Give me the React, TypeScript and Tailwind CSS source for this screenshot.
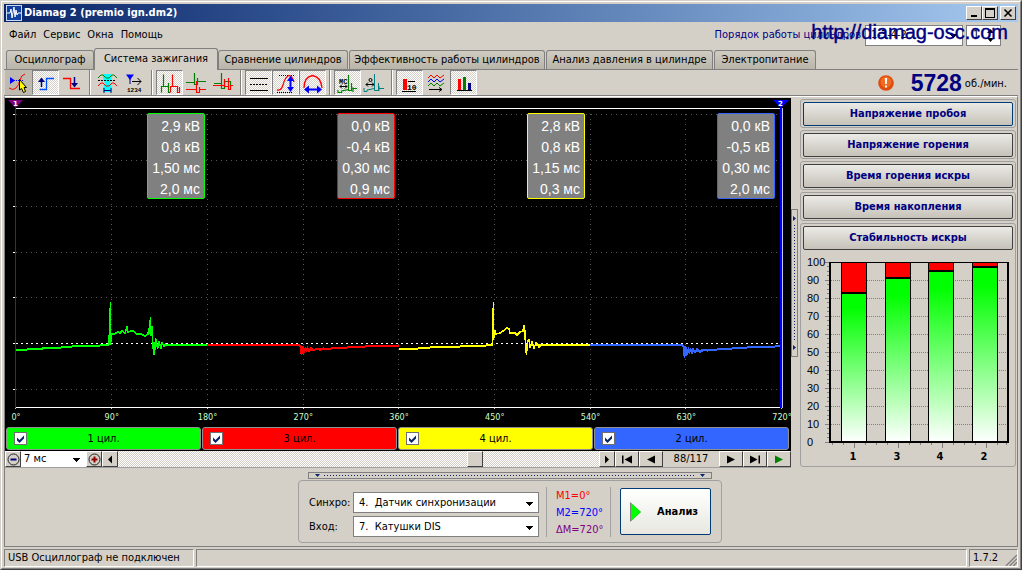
import { useState } from "react";
import type { ReactNode } from "react";

const RAISED =
  "border border-t-white border-l-white border-r-[#404040] border-b-[#404040] bg-[#d4d0c8]";
const CHECKER =
  "bg-[repeating-conic-gradient(#ffffff_0_25%,#d4d0c8_0_50%)] bg-[length:2px_2px]";

function AppLogo() {
  return (
    <svg viewBox="0 0 16 16" className="size-4" aria-hidden="true">
      <rect width="16" height="16" fill="#c8d8f0" />
      <rect x="1" y="1" width="14" height="14" fill="#1040a0" />
      <path d="M1 8H4L5 4L6 13L8 2L9 12L10 5L11 10L12 8H15" fill="none" stroke="#fff" strokeWidth="1" />
    </svg>
  );
}

function TitleBar() {
  const box =
    "flex h-[14px] w-4 items-center justify-center border border-t-white border-l-white border-r-[#404040] border-b-[#404040] bg-[#d4d0c8]";
  return (
    <header className="flex h-[18px] items-center bg-linear-to-r from-[#0a246a] to-[#a6caf0] pr-[2px] pl-[2px]">
      <AppLogo />
      <h1 className="ml-[2px] flex-1 text-[11px] leading-4 font-bold whitespace-nowrap text-white">
        Diamag 2 (premio ign.dm2)
      </h1>
      <button className={box} aria-label="Свернуть">
        <svg viewBox="0 0 12 10" className="h-[10px] w-3" shapeRendering="crispEdges">
          <path d="M3 7h6v2H3z" />
        </svg>
      </button>
      <button className={box} aria-label="Развернуть">
        <svg viewBox="0 0 12 10" className="h-[10px] w-3" shapeRendering="crispEdges">
          <path d="M1 0h10v10H1zM2 2v7h8V2z" fillRule="evenodd" />
        </svg>
      </button>
      <button className={`${box} ml-[2px]`} aria-label="Закрыть">
        <svg viewBox="0 0 12 10" className="h-[10px] w-3">
          <path d="M2.500 1.500L9.500 8.500M9.500 1.500L2.500 8.500" stroke="#000" strokeWidth="1.600" />
        </svg>
      </button>
    </header>
  );
}

function Caret({ className = "" }: { className?: string }) {
  return (
    <svg viewBox="0 0 7 4" className={`h-1 w-[7px] ${className}`} shapeRendering="crispEdges" aria-hidden="true">
      <path d="M0 0H7L3.500 4z" />
    </svg>
  );
}

function Drop({ id, label, options, className }: { id: string; label?: string; options: string[]; className: string }) {
  return (
    <div className={`relative ${className}`}>
      <select
        id={id}
        aria-label={label}
        className="block h-full w-full appearance-none border border-[#808080] bg-white pl-[5px] leading-4 outline-none"
      >
        {options.map((o) => (
          <option key={o}>{o}</option>
        ))}
      </select>
      <Caret className="pointer-events-none absolute top-1/2 right-[6px] -mt-px" />
    </div>
  );
}

function MenuBar() {
  return (
    <div className="relative flex h-[26px] items-center pl-[5px]">
      <nav className="flex flex-1 gap-[7px]">
        {["Файл", "Сервис", "Окна", "Помощь"].map((m) => (
          <button key={m}>{m}</button>
        ))}
      </nav>
      <label htmlFor="order" className="mr-1 text-[#000080]">
        Порядок работы цилиндров
      </label>
      <Drop id="order" options={["1-3-4-2", "1-2-4-3"]} className="h-[21px] w-[98px]" />
      <div className="mr-[17px] ml-[3px] flex h-[21px] w-[35px] items-center border border-[#808080] bg-white">
        <input aria-label="Номер цилиндра" defaultValue="1" className="w-[20px] bg-white pl-[6px] outline-none" />
        <svg viewBox="0 0 7 15" className="h-[15px] w-[7px]" aria-hidden="true">
          <path d="M0 5L3.500 1L7 5zM0 10L3.500 14L7 10z" />
        </svg>
      </div>
      <a
        href="http://diamag-osc.com"
        className="absolute top-0 right-[10px] font-['Liberation_Sans',sans-serif] text-[20px] leading-5 whitespace-nowrap text-[#000080] [-webkit-text-stroke:0.4px_#000080]"
      >
        http://diamag-osc.com
      </a>
    </div>
  );
}

const TABS: [string, string][] = [
  ["Осциллограф", "w-[88px]"],
  ["Система зажигания", "w-[124px]"],
  ["Сравнение цилиндров", "w-[130px]"],
  ["Эффективность работы цилиндров", "w-[196px]"],
  ["Анализ давления в цилиндре", "w-[167px]"],
  ["Электропитание", "w-[102px]"],
];

function TabStrip() {
  return (
    <div role="tablist" className="flex h-[21px] items-end gap-px pl-[2px]">
      {TABS.map(([name, width], i) => (
        <button
          key={name}
          role="tab"
          aria-selected={i === 1}
          className={
            i === 1
              ? `${width} relative z-10 -mx-px -mb-px h-[22px] rounded-t-[3px] border border-b-0 border-[#808080] bg-[#d4d0c8] pb-px whitespace-nowrap`
              : `${width} h-[19px] rounded-t-[3px] border border-b-0 border-[#808080] bg-linear-to-b from-[#d0ccc2] to-[#bab5a9] whitespace-nowrap`
          }
        >
          {name}
        </button>
      ))}
    </div>
  );
}

const RED = "#ff0000";
const GREEN = "#008000";
const BLUE = "#0000ff";

const ICONS: { name: string; pressed?: boolean; sep?: boolean; art: ReactNode }[] = [
  {
    name: "Синхронизация",
    art: (
      <>
        <path d="M4 18Q8 21 11 18Q14 15 15 10Q16 5 20 4" stroke={RED} />
        <path d="M9 10.500H18" stroke={BLUE} strokeDasharray="1 1" />
        <path d="M5 7V14L10 10.500z" fill={BLUE} />
        <path d="M14.500 9.500V20L16.500 18.500L18.500 22.500L20.500 21.500L19 17.500H21.500z" fill="#ffff00" stroke="#000" />
      </>
    ),
  },
  {
    name: "Фронт",
    pressed: true,
    art: (
      <>
        <path d="M7.500 19.500H14.500V8.500H22" stroke="#0050ff" strokeWidth="1.300" />
        <path d="M9.500 10V17" stroke="#000080" strokeWidth="1.500" />
        <path d="M6 12L9.500 7.500L13 12z" fill="#000080" />
      </>
    ),
  },
  {
    name: "Спад",
    art: (
      <>
        <path d="M4 8.500H11.500V18.500H21" stroke={RED} strokeWidth="1.300" />
        <path d="M15.500 7V14" stroke="#000080" strokeWidth="1.500" />
        <path d="M12 13L15.500 17.500L19 13z" fill="#000080" />
      </>
    ),
  },
  {
    name: "Фильтр",
    sep: true,
    art: (
      <>
        <path d="M9 4H18V8L16 13L18 18V22H9V18L11 13L9 8z" fill="#00ffff" />
        <path d="M4 8L7 5H9L12 8H15L18 5H20L23 8" stroke={GREEN} />
        <path d="M4 10.500H22" stroke="#000" strokeDasharray="2 1" />
        <path d="M4 16L7 13H9L12 16H15L18 13H20L23 16" stroke={RED} />
        <path d="M10 20.500H17M10 18V23M17 18V23" stroke="#000080" />
      </>
    ),
  },
  {
    name: "Нумерация",
    art: (
      <>
        <path d="M5 4.500H13L9 10z" fill={BLUE} />
        <path d="M9 9V14" stroke="#0000a0" />
        <path d="M11 11.500H20M16.500 8L20 11.500L16.500 15" stroke="#000" />
        <text x="6" y="22" fontSize="6" fontWeight="700" fontFamily="Liberation Mono, monospace" fill="#000">
          1234
        </text>
      </>
    ),
  },
  {
    name: "Последовательно",
    pressed: true,
    sep: true,
    art: (
      <g strokeWidth="1.200">
        <path d="M5.500 22.500V16.500H7.500V4.500V16.500H12.500V13V22.500H14" stroke={GREEN} />
        <path d="M14.500 22.500V16.500H16.500V4.500V16.500H21.500V22.500H23.500V17" stroke={RED} />
      </g>
    ),
  },
  {
    name: "Друг под другом",
    art: (
      <g strokeWidth="1.200">
        <path d="M3 12.500H11.500V3V14.500H14.500V8V11.500H23" stroke={GREEN} />
        <path d="M3 19.500H13.500V11V22.500H16.500V17V19.500H23" stroke={RED} />
      </g>
    ),
  },
  {
    name: "Наложение",
    art: (
      <g strokeWidth="1.200">
        <path d="M4 13.500H11.500V3V18.500H14.500V11.500H20.500V16" stroke={GREEN} />
        <path d="M3 15.500H14.500V9V16.500H18.500V8V19.500H20.500V15.500H23" stroke={RED} />
      </g>
    ),
  },
  {
    name: "Уровни",
    pressed: true,
    sep: true,
    art: (
      <>
        <path d="M5 8.500H23M5 20.500H23" stroke="#000" />
        <path d="M5 14.500H23" stroke="#000" strokeDasharray="2 1" />
      </>
    ),
  },
  {
    name: "Амплитуда",
    pressed: true,
    art: (
      <>
        <path d="M7 5.500H23M5 22.500H20" stroke="#000" strokeDasharray="1 1" />
        <path d="M5 20Q9 21 11 15Q13 7 17 5.500Q20 6 22 12" stroke={RED} strokeWidth="1.300" />
        <path d="M18.500 9V19" stroke={BLUE} strokeWidth="2" />
        <path d="M15 11L18.500 6L22 11zM15 17L18.500 22L22 17z" fill={BLUE} />
      </>
    ),
  },
  {
    name: "Длительность",
    pressed: true,
    art: (
      <>
        <path d="M5 18Q5 7 13.500 5.500Q22 7 23 18" stroke={RED} strokeWidth="1.300" />
        <path d="M9 19.500H19" stroke={BLUE} strokeWidth="2" />
        <path d="M10 15.500L5 19.500L10 23.500zM18 15.500L23 19.500L18 23.500z" fill={BLUE} />
      </>
    ),
  },
  {
    name: "Миллисекунды",
    pressed: true,
    sep: true,
    art: (
      <>
        <text x="5" y="14" fontSize="7" fontWeight="700" fontFamily="Liberation Mono, monospace" fill="#000">
          МС
        </text>
        <path d="M6 16.500H13M8 14.500L6 16.500L8 18.500M11 14.500L13 16.500L11 18.500" stroke="#000" />
        <path d="M4 20V22.500H7.500V21L14.500 19.500V5V20.500H17.500V13M17 18H19V22M19 18.500H23" stroke={GREEN} strokeWidth="1.200" />
      </>
    ),
  },
  {
    name: "Градусы",
    art: (
      <>
        <circle cx="9.500" cy="10" r="1.500" stroke="#000" />
        <path d="M5 14.500H13M7 12.500L5 14.500L7 16.500M11 12.500L13 14.500L11 16.500" stroke="#000" />
        <path d="M3 18V21.500H6V20L13.500 18.500V4V20.500H17.500V13M18 16V21M18 18.500H23" stroke="#008080" />
      </>
    ),
  },
  {
    name: "Значения",
    pressed: true,
    sep: true,
    art: (
      <>
        <path d="M7 9H11V20H7z" fill={RED} />
        <path d="M12 11.500H19M6 21.500H20" stroke="#000" />
        <text x="11" y="20" fontSize="8" fontWeight="700" fontFamily="Liberation Mono, monospace" fill="#000">
          10
        </text>
      </>
    ),
  },
  {
    name: "Тренд",
    art: (
      <>
        <path d="M5 8L8 5L11 8L14 5L17 8L21 5" stroke={RED} />
        <path d="M5 12L8 9L11 12L14 9L17 12L21 9" stroke={BLUE} />
        <path d="M5 16L8 13L11 16L14 13L17 16L21 13" stroke={GREEN} />
        <path d="M6 19.500H19M16 17.500L19 19.500L16 21.500" stroke="#000" />
      </>
    ),
  },
  {
    name: "Гистограмма",
    pressed: true,
    art: (
      <>
        <path d="M8 9H11V20H8z" fill={RED} />
        <path d="M13 7H16V20H13z" fill={GREEN} />
        <path d="M18 13H21V20H18z" fill="#000080" />
        <path d="M7 20.500H22" stroke="#000" />
      </>
    ),
  },
];

function Toolbar() {
  return (
    <div className="flex h-[27px] items-center border-y border-t-[#808080] border-b-[#808080] pl-px">
      {ICONS.map((icon, i) => (
        <div key={icon.name} className="flex">
          {icon.sep && (
            <span className="mx-[3px] h-[25px] w-[2px] border-r border-l border-r-white border-l-[#808080]" />
          )}
          <button
            aria-label={icon.name}
            aria-pressed={!!icon.pressed}
            className={
              icon.pressed
                ? `h-[25px] w-[27px] border border-t-[#808080] border-l-[#808080] border-r-white border-b-white ${CHECKER}`
                : i === 0
                  ? "h-[25px] w-[27px] border border-transparent bg-[#bfbab0]"
                  : "h-[25px] w-[27px] border border-transparent"
            }
          >
            <svg viewBox="0 0 27 25" className="-m-px h-[25px] w-[27px]" fill="none">
              {icon.art}
            </svg>
          </button>
        </div>
      ))}
      <div className="ml-auto flex items-center pr-[11px]">
        <svg viewBox="0 0 16 16" className="mr-[17px] size-4" aria-hidden="true">
          <circle cx="8" cy="8" r="7.800" fill="#e04c0c" />
          <circle cx="8" cy="7" r="5.500" fill="#f06a20" />
          <path d="M6.800 3h2.400l-.4 6H7.200zM7 10.500h2v2H7z" fill="#fff" />
        </svg>
        <strong className="font-['Liberation_Sans',sans-serif] text-[23px] leading-6 text-[#000080]">5728</strong>
        <span className="ml-[3px] pt-[3px]">об./мин.</span>
      </div>
    </div>
  );
}

const X_LINES = [111, 207, 303, 398, 494, 590, 685];
const Y_LINES = [114, 160, 206, 252, 297, 389];
const Y_TICKS = [114, 160, 206, 252, 297, 343, 389];

const WAVES = [
  {
    color: "#00ff00",
    slope: "16,350 24,350 30,349 40,349 45,348 57,348 65,347 80,346 92,346 109,345",
    burst:
      "109,345 109.500,325 110.500,302 110.500,345 111.500,334 114,334 118,332 120,333 122,331 125,333 127,327 128,332 131,331 133,331 137,334 141,334 145,336 148,334 149,328 149,334 150.500,317 151,336 152,326 152.500,343 153,343 153.500,354 154.500,354 155.500,338 156.500,342 157.500,349 159,342 161,348 162,343 164,346 166,344",
    tail: "166,345 207,345",
  },
  {
    color: "#ff0000",
    slope: "207,345 300,345",
    burst:
      "300,345 301.500,355 302,346 303,354 303.500,346 304.500,353 305.500,347 306.500,352 307.500,348 309,351 311,348 313,350 316,349 320,350 324,348",
    tail: "308,350 322,349 340,348 355,347 375,346 399,346",
  },
  {
    color: "#ffff00",
    slope: "399,349 411,349 425,348 435,347 455,347 465,346 480,346 493,345",
    burst:
      "492.500,345 492.500,325 493.500,302 493.500,340 495,330 496,334 500,333 503,331 507,328 509,329 510,333 515,333 517,335 520,332 523,331 524,325 525,331 525.500,347 526.500,355 527.500,341 529,340 530,348 532,342 534,348 536,343 539,347 542,344",
    tail: "536,345 590,345",
  },
  {
    color: "#3366ff",
    slope: "590,345 683,345",
    burst:
      "683,345 684.500,358 685,346 686,356 686.500,347 687.500,355 688.500,347 689.500,354 690.500,348 692,353 693,349 695,352 697,349 700,352 704,350 708,351",
    tail: "692,351 710,350 725,349 740,348 755,347 770,347 781,346",
  },
];

const READOUTS = [
  { frame: "border-[#00ff00]", values: ["2,9 кВ", "0,8 кВ", "1,50 мс", "2,0 мс"] },
  { frame: "border-[#ff0000]", values: ["0,0 кВ", "-0,4 кВ", "0,30 мс", "0,9 мс"] },
  { frame: "border-[#ffff00]", values: ["2,8 кВ", "0,8 кВ", "1,15 мс", "0,3 мс"] },
  { frame: "border-[#3366ff]", values: ["0,0 кВ", "-0,5 кВ", "0,30 мс", "2,0 мс"] },
];

const CYLINDERS = [
  { name: "1 цил.", fill: "bg-[#00ff00]" },
  { name: "3 цил.", fill: "bg-[#ff0000]" },
  { name: "4 цил.", fill: "bg-[#ffff00]" },
  { name: "2 цил.", fill: "bg-[#3366ff]" },
];

function Scope() {
  return (
    <div className="relative bg-black">
      <svg viewBox="5 98 786 311" preserveAspectRatio="none" className="block h-[311px] w-full" fill="none">
        <g shapeRendering="crispEdges">
          {X_LINES.map((x) => (
            <path key={x} d={`M${x}.500 114V407`} stroke="#585858" strokeDasharray="1 4" />
          ))}
          {Y_LINES.map((y) => (
            <path key={y} d={`M16 ${y}.500H781`} stroke="#585858" strokeDasharray="1 4" />
          ))}
          {Y_TICKS.map((y) => (
            <path key={y} d={`M13 ${y}.500H15`} stroke="#fff" />
          ))}
          {[15, ...X_LINES, 781].map((x) => (
            <path key={x} d={`M${x}.500 408V410`} stroke="#c8c8c8" />
          ))}
          <path d="M16 108.500H781M16 407.500H782" stroke="#fff" />
          <path d="M16 343.500H781" stroke="#fff" strokeDasharray="2 3" />
          {WAVES.map((w) => (
            <g key={w.color} stroke={w.color}>
              <polyline points={w.slope} strokeWidth="2" />
              <polyline points={w.burst} strokeWidth="1.500" />
              <polyline points={w.tail} strokeWidth="2" />
            </g>
          ))}
          <path d="M15 106H16V408H15z" fill="#800080" />
          <path d="M780 106H782V408H780z" fill="#0000ff" />
          <path d="M782 108H783V408H782z" fill="#c8c8ff" />
        </g>
        <path d="M8 100H23L15.500 108z" fill="#800080" />
        <path d="M773 100H789L781 108z" fill="#0000ff" />
        <g fill="#fff" fontSize="7" fontWeight="700" textAnchor="middle" fontFamily="DejaVu Sans, sans-serif">
          <text x="15.500" y="106">1</text>
          <text x="780.500" y="106">2</text>
        </g>
      </svg>
      <div className="absolute top-[15px] right-[16px] left-[10px] grid grid-cols-4 justify-items-end">
        {READOUTS.map((r) => (
          <div
            key={r.frame}
            className={`h-[86px] w-[58px] rounded-[2px] border bg-[#808080] pt-[2px] pr-1 text-right font-['Liberation_Sans',sans-serif] text-[14px] leading-[21px] whitespace-nowrap text-white ${r.frame}`}
          >
            {r.values.map((v) => (
              <div key={v}>{v}</div>
            ))}
          </div>
        ))}
      </div>
      <div className="flex h-[17px] justify-between overflow-hidden pr-[9px] pl-[11px] text-[9px] leading-4 text-[#ccffcc]">
        {[0, 90, 180, 270, 360, 450, 540, 630, 720].map((d) => (
          <span key={d} className="flex w-0 justify-center">
            {d}°
          </span>
        ))}
      </div>
      <div className="grid grid-cols-4 gap-px py-px pr-[2px] pl-px">
        {CYLINDERS.map((c) => (
          <CylinderToggle key={c.name} {...c} />
        ))}
      </div>
    </div>
  );
}

function CylinderToggle({ name, fill }: { name: string; fill: string }) {
  const [on, setOn] = useState(true);
  return (
    <label className={`flex h-[23px] items-center rounded-[3px] border border-[#909090] ${fill}`}>
      <span className="relative ml-[7px] size-[13px]">
        <input
          type="checkbox"
          checked={on}
          onChange={() => setOn(!on)}
          className="block size-[13px] appearance-none border border-[#707070] bg-white"
        />
        {on && (
          <svg viewBox="0 0 13 13" className="pointer-events-none absolute inset-0 size-[13px]">
            <path d="M3 5.500L5.500 8L10 3.500V6.500L5.500 11L3 8.500z" fill="#0a246a" />
          </svg>
        )}
      </span>
      <span className="flex-1 pr-5 text-center">{name}</span>
    </label>
  );
}

function Glyph({ d, color = "#000" }: { d: string; color?: string }) {
  return (
    <svg viewBox="0 0 12 9" className="h-[9px] w-3" aria-hidden="true">
      <path d={d} fill={color} />
    </svg>
  );
}

function ScrollRow() {
  const nav = `flex h-4 w-6 items-center justify-center ${RAISED}`;
  return (
    <div className="flex h-[17px] items-start border-b border-[#a0a0a0]">
      <button aria-label="Уменьшить масштаб" className={`flex size-4 items-center justify-center ${RAISED}`}>
        <svg viewBox="0 0 13 13" className="size-[13px] shrink-0">
          <circle cx="6.500" cy="6.500" r="5.500" fill="none" stroke="#222" />
          <path d="M3.500 5.500h6v2h-6z" fill="#000080" />
        </svg>
      </button>
      <Drop id="time" label="Развёртка" options={["7 мс", "14 мс"]} className="h-4 w-[65px] [&>select]:border-0 [&>select]:pl-[3px]" />
      <button aria-label="Увеличить масштаб" className={`flex size-4 items-center justify-center ${RAISED}`}>
        <svg viewBox="0 0 13 13" className="size-[13px] shrink-0">
          <circle cx="6.500" cy="6.500" r="5.500" fill="none" stroke="#222" />
          <path d="M3.500 5.500h2v-2h2v2h2v2h-2v2h-2v-2h-2z" fill="#900000" />
        </svg>
      </button>
      <button aria-label="Прокрутить влево" className={`flex size-4 items-center justify-center ${RAISED}`}>
        <Glyph d="M8 0.500V8.500L4 4.500z" />
      </button>
      <div className={`flex h-4 flex-1 ${CHECKER}`}>
        <span className="flex-[348]" />
        <span className={`h-4 w-4 ${RAISED}`} />
        <span className="flex-[116]" />
      </div>
      <button aria-label="Прокрутить вправо" className={`flex size-4 items-center justify-center ${RAISED}`}>
        <Glyph d="M4 0.500V8.500L8 4.500z" />
      </button>
      <button aria-label="В начало" className={nav}>
        <Glyph d="M1 .5h1.500v8H1zM11 .5v8L3.500 4.500z" />
      </button>
      <button aria-label="Назад" className={nav}>
        <Glyph d="M10 .5v8L2 4.500z" />
      </button>
      <output className="h-4 w-[56px] text-center leading-4">88/117</output>
      <button aria-label="Вперёд" className={nav}>
        <Glyph d="M2 .5v8L10 4.500z" />
      </button>
      <button aria-label="В конец" className={nav}>
        <Glyph d="M1 .5v8L8.500 4.500zM9.500 .5H11v8H9.500z" />
      </button>
      <button aria-label="Воспроизвести" className={nav}>
        <Glyph d="M2 .5v8L10 4.500z" color="#008000" />
      </button>
    </div>
  );
}

const BARS = [
  { name: "1", value: 83, x: 39 },
  { name: "3", value: 91, x: 83 },
  { name: "4", value: 95, x: 126 },
  { name: "2", value: 97, x: 170 },
];

function StabilityChart() {
  const y = (v: number) => 192 - v * 1.8;
  const scale = [0, 10, 20, 30, 40, 50, 60, 70, 80, 90, 100];
  return (
    <svg viewBox="0 0 210 215" className="block h-auto w-full">
      <defs>
        <linearGradient id="spark" x1="0" y1="0" x2="0" y2="1">
          <stop offset="0" stopColor="#00ff00" />
          <stop offset="0.100" stopColor="#00ff00" />
          <stop offset="1" stopColor="#ffffff" />
        </linearGradient>
      </defs>
      <g shapeRendering="crispEdges">
        {scale.map((v) => (
          <path key={v} d={`M22 ${y(v)}.500H26`} stroke="#808080" />
        ))}
        {scale.slice(1, 10).map((v) => (
          <path key={v} d={`M28 ${y(v)}.500H204`} stroke="#808080" strokeDasharray="1 1" />
        ))}
        {scale.slice(0, 10).map((v) => (
          <path
            key={v}
            d={`M24 ${y(v + 2.5)}H26M24 ${y(v + 5)}H26M24 ${y(v + 7.5)}H26`}
            stroke="#808080"
          />
        ))}
        {BARS.map((b) => (
          <g key={b.name}>
            <rect x={b.x} y="12" width="24" height="180" fill="#ff0000" />
            <rect x={b.x} y={y(b.value)} width="24" height={192 - y(b.value)} fill="url(#spark)" />
            <rect x={b.x - 0.5} y="12.500" width="25" height="180" fill="none" stroke="#000" />
            <path d={`M${b.x} ${Math.round(y(b.value))}h24`} stroke="#000" strokeWidth="2" />
          </g>
        ))}
        <path d="M26 12.500H206" stroke="#000" />
        <path d="M27 12V193M205 12V193M26 192H206" stroke="#000" strokeWidth="2" />
        {[29, 40, 51, 62, 73, 84, 95, 106, 117, 128, 139, 150, 161, 172, 183, 194, 203].map((x, i) => (
          <path key={x} d={`M${x}.500 193V${i % 4 === 2 ? 198 : 195}`} stroke="#808080" />
        ))}
      </g>
      <g fontFamily="Liberation Sans, sans-serif" fontSize="11">
        {scale.map((v) => (
          <text key={v} x="4" y={y(v) + 4}>
            {v}
          </text>
        ))}
      </g>
      <g fontFamily="DejaVu Sans Condensed, DejaVu Sans, sans-serif" fontSize="11" fontWeight="700" textAnchor="middle">
        {BARS.map((b) => (
          <text key={b.name} x={b.x + 11} y="210">
            {b.name}
          </text>
        ))}
      </g>
    </svg>
  );
}

const METRICS = ["Напряжение пробоя", "Напряжение горения", "Время горения искры", "Время накопления", "Стабильность искры"];

function SidePanel() {
  return (
    <aside className="mr-px flex w-[216px] flex-col gap-[2px] pt-px">
      {METRICS.map((m, i) => (
        <section key={m} className="rounded-[3px] border border-[#a0a0a0] px-[2px] pt-[2px] pb-px">
          <button
            className={`h-6 w-full rounded-[2px] border bg-linear-to-b from-[#ebeae6] to-[#c6c2b9] text-[11px] font-bold text-[#000080] ${
              i === 0 ? "border-[#003c74]" : "border-[#404040]"
            }`}
          >
            {m}
          </button>
          {i === METRICS.length - 1 && <StabilityChart />}
        </section>
      ))}
    </aside>
  );
}

function ControlPanel() {
  return (
    <div className="flex flex-col items-center pt-1 pr-[2px] pb-[3px]">
      <div className="flex h-[7px] w-[404px] items-center border border-[#808080] px-[6px]">
        <svg viewBox="0 0 5 3" className="h-[3px] w-[5px]" aria-hidden="true">
          <path d="M0 0H5L2.500 3z" fill="#0a246a" />
        </svg>
        <span className="mx-1 h-px flex-1 bg-[repeating-linear-gradient(90deg,#0a246a_0_1px,transparent_1px_3px)]" />
        <svg viewBox="0 0 5 3" className="h-[3px] w-[5px]" aria-hidden="true">
          <path d="M0 0H5L2.500 3z" fill="#0a246a" />
        </svg>
      </div>
      <section className="mt-px flex h-[63px] w-[424px] items-center rounded-[4px] border border-[#a0a0a0] px-[10px]">
        <div className="grid grid-cols-[44px_186px] items-center gap-y-[3px] pt-[6px]">
          <label htmlFor="sync">Синхро:</label>
          <Drop id="sync" options={["4.\u00a0 Датчик синхронизации"]} className="h-[21px]" />
          <label htmlFor="input">Вход:</label>
          <Drop id="input" options={["7.\u00a0 Катушки DIS"]} className="h-[21px]" />
        </div>
        <div className="ml-[7px] flex h-[50px] w-[65px] flex-col border-x border-[#a0a0a0] pl-[9px] leading-[17px]">
          <span className="text-[#ff0000]">M1=0°</span>
          <span className="text-[#0000ff]">M2=720°</span>
          <span className="text-[#800080]">ΔM=720°</span>
        </div>
        <button className="ml-auto flex h-[47px] w-[91px] items-center rounded-[2px] border border-[#003c74] bg-linear-to-b from-white to-[#e8e8e0] pl-[9px] text-[11px] font-bold">
          <svg viewBox="0 0 11 20" className="mr-4 h-5 w-[11px]" aria-hidden="true">
            <path d="M0 0V20L11 10z" fill="#808080" />
            <path d="M1 1V19L11 10z" fill="#00ff00" />
          </svg>
          Анализ
        </button>
      </section>
    </div>
  );
}

function StatusBar() {
  const cell = "h-[18px] border border-t-[#808080] border-l-[#808080] border-r-white border-b-white leading-4";
  return (
    <footer className="mt-auto flex gap-[2px] border-t border-[#808080] pt-[2px]">
      <span className={`${cell} w-[190px] pl-[3px] whitespace-nowrap`}>USB Осциллограф не подключен</span>
      <span className={`${cell} flex-1`} />
      <span className={`${cell} flex w-[49px] justify-between pl-[3px]`}>
        1.7.2
        <svg viewBox="0 0 13 13" className="mt-1 size-3" aria-hidden="true">
          <path d="M1 13L13 1M5 13L13 5M9 13L13 9" stroke="#808080" strokeWidth="1.500" />
        </svg>
      </span>
    </footer>
  );
}

export default function App() {
  return (
    <div className="flex min-h-screen flex-col border border-t-[#d4d0c8] border-r-[#404040] border-b-[#404040] border-l-[#d4d0c8] bg-[#d4d0c8] font-['DejaVu_Sans_Condensed','DejaVu_Sans',sans-serif] text-[11px] leading-4 text-black">
      <div className="flex flex-1 flex-col border border-t-white border-r-[#808080] border-b-[#808080] border-l-white px-[2px] pt-[2px] pb-px">
        <TitleBar />
        <MenuBar />
        <TabStrip />
        <Toolbar />
        <main className="flex flex-1 flex-col border-x border-[#808080] border-t border-t-white pt-px">
          <div className="flex items-start">
            <div className="min-w-0 flex-1">
              <Scope />
              <ScrollRow />
            </div>
            <div className="mt-[111px] mr-[2px] flex h-[148px] w-[7px] flex-col items-center border border-[#808080] py-[6px]">
              <svg viewBox="0 0 3 5" className="h-[5px] w-[3px]" aria-hidden="true">
                <path d="M0 0V5L3 2.500z" fill="#0a246a" />
              </svg>
              <span className="my-1 w-px flex-1 bg-[repeating-linear-gradient(180deg,#0a246a_0_1px,transparent_1px_3px)]" />
              <svg viewBox="0 0 3 5" className="h-[5px] w-[3px]" aria-hidden="true">
                <path d="M0 0V5L3 2.500z" fill="#0a246a" />
              </svg>
            </div>
            <SidePanel />
          </div>
          <ControlPanel />
        </main>
        <StatusBar />
      </div>
    </div>
  );
}
